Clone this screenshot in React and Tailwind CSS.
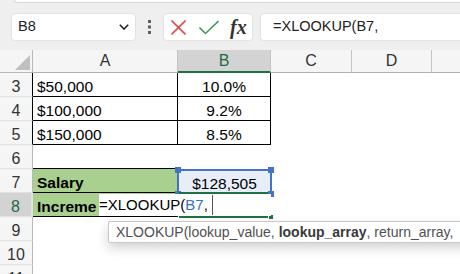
import React from 'react';

// Excel-like sheet: formula bar + small bordered table, editing B8
const GREEN = 'border-[#1e7145]';

function RowHead({ n, selected, dark }) {
  const base = 'w-[33px] shrink-0 flex items-end justify-center leading-[18px] text-[16px] border-b border-[#e1e1e1]';
  if (selected) {
    return <div className={`${base} bg-[#d3d3d3] text-[#1e6b41] border-r-2 ${GREEN}`}>{n}</div>;
  }
  return (
    <div className={`${base} bg-[#f5f5f5] text-[#333] border-r ${dark ? 'border-r-black' : 'border-r-[#b9b9b9]'}`}>
      {n}
    </div>
  );
}

function Blank() {
  return <div className="flex-1" />;
}

export default function App() {
  return (
    <div className="w-[460px] h-[274px] overflow-hidden bg-white font-['Liberation_Sans',Arial,sans-serif] text-black">
      {/* ── Formula bar ─────────────────────────────────────────── */}
      <div className="h-[50px] bg-[#efefef]">
        <div className="ml-[14px] h-[3px] bg-white border-b border-l border-[#d6d6d6] rounded-bl-[4px]" />
        <div className="flex items-center mt-[10px] h-[28px]">
          <div className="ml-[11px] w-[125px] h-[28px] bg-white rounded-[4px] border border-[#e2e2e2] flex items-center justify-between pl-[6px] pr-[6px]">
            <span className="text-[14.5px] text-[#222]">B8</span>
            <svg width="10" height="6" viewBox="0 0 10 6" fill="none">
              <polyline points="0.8,0.8 5,5 9.2,0.8" stroke="#222" strokeWidth="1.6" />
            </svg>
          </div>
          <div className="w-[27px] flex justify-center">
            <svg width="3" height="14" viewBox="0 0 3 14">
              <rect x="0" y="0" width="3" height="3" fill="#5f5f5f" />
              <rect x="0" y="5.5" width="3" height="3" fill="#5f5f5f" />
              <rect x="0" y="11" width="3" height="3" fill="#5f5f5f" />
            </svg>
          </div>
          <div className="w-[90px] h-[28px] bg-white rounded-[4px] border border-[#e2e2e2] flex items-center pl-[7px]">
            <svg width="15" height="15" viewBox="0 0 15 15" fill="none">
              <line x1="0.5" y1="0.5" x2="14.5" y2="14.5" stroke="#e5484d" strokeWidth="1.6" />
              <line x1="14.5" y1="0.5" x2="0.5" y2="14.5" stroke="#e5484d" strokeWidth="1.6" />
            </svg>
            <svg className="ml-[13px]" width="20" height="15" viewBox="0 0 20 15" fill="none">
              <polyline points="0.5,7.5 6.5,13.5 19.5,1" stroke="#3f9b5a" strokeWidth="1.6" />
            </svg>
            <span className="ml-[11px] font-['Liberation_Serif',serif] italic font-semibold text-[20px] leading-none text-[#333]">fx</span>
          </div>
          <div className="ml-[7px] flex-1 h-[28px] bg-white rounded-l-[4px] border border-r-0 border-[#e2e2e2] pl-[12px] flex items-center text-[14.5px] text-[#222]">
            =XLOOKUP(B7,
          </div>
        </div>
      </div>

      {/* ── Grid ────────────────────────────────────────────────── */}
      <div className="relative">
        {/* column headers */}
        <div className="flex h-[23px] text-[16px] text-[#333]">
          <div className="w-[33px] shrink-0 bg-[#f5f5f5] border-r border-b border-[#b9b9b9] flex items-end justify-end pr-[2px] pb-[2px]">
            <svg width="15" height="15" viewBox="0 0 15 15">
              <polygon points="15,0 15,15 0,15" fill="#c0c0c0" />
            </svg>
          </div>
          <div className="w-[145px] shrink-0 bg-[#f5f5f5] border-r border-b border-[#c4c4c4] border-b-[#b1b1b1] flex items-center justify-center">A</div>
          <div className={`w-[93px] shrink-0 bg-[#d3d3d3] border-r border-r-[#c4c4c4] border-b-2 ${GREEN} flex items-center justify-center text-[#1e6b41]`}>B</div>
          <div className="w-[81px] shrink-0 bg-[#f5f5f5] border-r border-b border-[#c4c4c4] border-b-[#b1b1b1] flex items-center justify-center">C</div>
          <div className="w-[80px] shrink-0 bg-[#f5f5f5] border-r border-b border-[#c4c4c4] border-b-[#b1b1b1] flex items-center justify-center">D</div>
          <div className="flex-1 bg-[#f5f5f5] border-b border-[#b1b1b1]" />
        </div>

        {/* rows 3–5: bordered lookup table */}
        {[
          ['3', '$50,000', '10.0%'],
          ['4', '$100,000', '9.2%'],
          ['5', '$150,000', '8.5%'],
        ].map(([n, a, b]) => (
          <div key={n} className="flex h-[24px] text-[15.5px] leading-[18px]">
            <RowHead n={n} dark />
            <div className="w-[145px] shrink-0 border-r border-b border-black flex items-end pl-[4px]">{a}</div>
            <div className="w-[93px] shrink-0 border-r border-b border-black flex items-end justify-center">{b}</div>
            <Blank />
          </div>
        ))}

        {/* row 6 */}
        <div className="flex h-[24px]">
          <RowHead n="6" />
          <div className="w-[145px] shrink-0 border-b border-black" />
          <Blank />
        </div>

        {/* row 7 */}
        <div className="flex h-[24px] text-[15.5px] leading-[18px]">
          <RowHead n="7" />
          <div className="w-[145px] shrink-0 bg-[#a9d08e] border-b border-black flex items-end pl-[4px] font-bold">Salary</div>
          <div className="w-[93px] shrink-0 bg-[#e8eef8] flex items-end justify-center">$128,505</div>
          <Blank />
        </div>

        {/* row 8: text clipped by the in-cell editor */}
        <div className="flex h-[24px] text-[15.5px] leading-[18px]">
          <RowHead n="8" selected />
          <div className="w-[145px] shrink-0 bg-[#a9d08e] border-b border-black flex items-end pl-[4px] font-bold whitespace-nowrap">Increme</div>
          <Blank />
        </div>

        {['9', '10', '11'].map((n) => (
          <div key={n} className="flex h-[24px]">
            <RowHead n={n} />
            <Blank />
          </div>
        ))}

        {/* B7 reference highlight */}
        <div className="absolute left-[177px] top-[119px] w-[95px] h-[25px] border-2 border-b-0 border-[#4472c4]">
          <div className="absolute -left-[4px] -top-[4px] w-[6px] h-[6px] bg-[#4472c4]" />
          <div className="absolute -right-[4px] -top-[4px] w-[6px] h-[6px] bg-[#4472c4]" />
          <div className="absolute -left-[4px] -bottom-[3px] w-[6px] h-[6px] bg-[#4472c4]" />
          <div className="absolute -right-[4px] -bottom-[3px] w-[6px] h-[6px] bg-[#4472c4]" />
        </div>

        {/* active cell B8 */}
        <div className="absolute left-[179px] top-[142px] w-[89px] h-[2px] bg-[#1e7145]" />
        <div className="absolute left-[179px] top-[166px] w-[91px] h-[2px] bg-[#1e7145]" />
        <div className="absolute left-[268px] top-[164px] w-[6px] h-[6px] bg-[#1e7145] border border-white" />

        {/* in-cell editor */}
        <div className="absolute left-[99px] top-[144px] w-[172px] h-[22px] bg-white flex items-center text-[15px] whitespace-nowrap">
          <span>=XLOOKUP(</span>
          <span className="text-[#3a6fc4]">B7</span>
          <span>,</span>
          <span className="ml-[4px] w-px h-[20px] bg-[#555]" />
        </div>

        {/* function tooltip */}
        <div className="absolute left-[108px] top-[171px] w-[380px] h-[22px] bg-white border border-[#c8c8c8] rounded-[2px] shadow-[0_5px_12px_rgba(0,0,0,0.18)] flex items-center pl-[7px] text-[14px] text-[#505050] whitespace-nowrap">
          XLOOKUP(lookup_value,&nbsp;<b className="text-[#3a3a3a]">lookup_array</b>, return_array,
        </div>
      </div>
    </div>
  );
}
